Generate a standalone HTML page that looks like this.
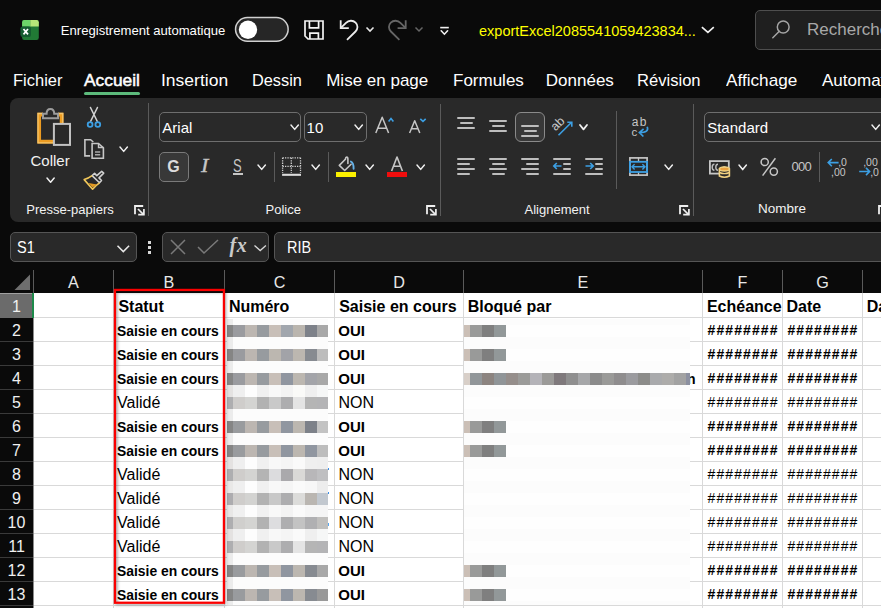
<!DOCTYPE html>
<html><head><meta charset="utf-8"><style>
html,body{margin:0;padding:0;}
body{width:881px;height:608px;overflow:hidden;position:relative;background:#0a0a0a;font-family:"Liberation Sans", sans-serif;}
.t{position:absolute;white-space:nowrap;}
.r{position:absolute;box-sizing:content-box;}
svg.r{overflow:visible;}
</style></head><body>
<svg class="r" style="left:10px;top:12px;" width="35" height="35" viewBox="0 0 35 35">
<rect x="12.1" y="8.1" width="16.7" height="19.8" rx="2.2" fill="#217a35"/>
<path d="M12.1 14.4 V10.3 Q12.1 8.1 14.3 8.1 H20.3 V14.4 Z" fill="#6dd469"/>
<path d="M20.3 8.1 H26.6 Q28.8 8.1 28.8 10.3 V14.4 H20.3 Z" fill="#b6e878"/>
<rect x="10.4" y="14.4" width="10.6" height="10.6" rx="2.2" fill="#155c30"/>
<path d="M13.5 17 L18 22.4 M18 17 L13.5 22.4" stroke="#fff" stroke-width="1.7"/>
</svg>
<div class="t" style="left:60.8px;top:23.81px;font-size:13.1px;line-height:13.1px;color:#fff;font-weight:400;">Enregistrement automatique</div>
<svg class="r" style="left:234px;top:16px;" width="56" height="27" viewBox="0 0 56 27"><rect x="1.55" y="1.55" width="52.6" height="23.6" rx="11.8" fill="#262626" stroke="#d0d0d0" stroke-width="1.5"/><circle cx="14" cy="13.7" r="9.2" fill="#fff"/></svg>
<svg class="r" style="left:303px;top:19px;" width="22" height="22" viewBox="0 0 22 22">
<path d="M2 2 H20 V20 H5 L2 17 Z" fill="none" stroke="#f4f4f4" stroke-width="1.7"/>
<path d="M6.4 2 V8.9 H15.6 V2" fill="none" stroke="#f4f4f4" stroke-width="1.7"/>
<path d="M6.9 20 V14.1 H15.4 V20" fill="none" stroke="#f4f4f4" stroke-width="1.7"/>
</svg>
<svg class="r" style="left:335px;top:15px;" width="30" height="30" viewBox="0 0 30 30">
<path d="M5.7 5.2 V13.1 H13.8" fill="none" stroke="#ececec" stroke-width="1.8"/>
<path d="M5.9 12.9 L11 7.8 C13.6 5.2 18 5.0 20.6 7.6 C23.2 10.2 23 14 20.5 16.5 L12 24.8" fill="none" stroke="#ececec" stroke-width="1.8"/>
</svg>
<svg class="r" style="left:365px;top:26px;" width="10" height="7" viewBox="0 0 10 7"><path d="M1.5 1.5 L5 5 L8.5 1.5" fill="none" stroke="#e8e8e8" stroke-width="1.6"/></svg>
<svg class="r" style="left:383px;top:15px;" width="30" height="30" viewBox="0 0 30 30"><g transform="translate(28.4,0) scale(-1,1)">
<path d="M5.7 5.2 V13.1 H13.8" fill="none" stroke="#666" stroke-width="1.8"/>
<path d="M5.9 12.9 L11 7.8 C13.6 5.2 18 5.0 20.6 7.6 C23.2 10.2 23 14 20.5 16.5 L12 24.8" fill="none" stroke="#666" stroke-width="1.8"/></g>
</svg>
<svg class="r" style="left:413.5px;top:26px;" width="10" height="7" viewBox="0 0 10 7"><path d="M1.5 1.5 L5 5 L8.5 1.5" fill="none" stroke="#666" stroke-width="1.5"/></svg>
<svg class="r" style="left:430px;top:15px;" width="30" height="30" viewBox="0 0 30 30"><path d="M10.2 12.6 H18.8" stroke="#f0f0f0" stroke-width="1.6"/><path d="M11.2 15.8 L14.4 19.2 L17.6 15.8" fill="none" stroke="#f0f0f0" stroke-width="1.6" stroke-linecap="round"/></svg>
<div class="t" style="left:479.0px;top:23.63px;font-size:14.5px;line-height:14.5px;color:#ffff00;font-weight:400;">exportExcel2085541059423834...</div>
<svg class="r" style="left:695px;top:15px;" width="30" height="30" viewBox="0 0 30 30"><path d="M6.9 12.2 L12.9 17.4 L18.8 12.2" fill="none" stroke="#f0f0f0" stroke-width="1.7"/></svg>
<div class="r" style="left:755px;top:10px;width:140px;height:38px;border:1px solid #4e4e4e;border-radius:5px;background:#1f1f1f"></div>
<svg class="r" style="left:760px;top:12px;" width="40" height="40" viewBox="0 0 40 40"><circle cx="23.2" cy="15" r="5.9" fill="none" stroke="#a4a4a4" stroke-width="1.5"/><path d="M19.3 19.3 L12.8 25.8" stroke="#a4a4a4" stroke-width="1.5" stroke-linecap="round"/></svg>
<div class="t" style="left:807.0px;top:20.71px;font-size:17px;line-height:17px;color:#a8a8a8;font-weight:400;">Recherche</div>
<div class="t" style="left:13.0px;top:71.61px;font-size:17px;line-height:17px;color:#ffffff;font-weight:400;transform:scaleX(0.97);transform-origin:0 0;">Fichier</div>
<div class="t" style="left:84.0px;top:71.61px;font-size:17px;line-height:17px;color:#ffffff;font-weight:400;transform:scaleX(1.02);transform-origin:0 0;-webkit-text-stroke:0.5px #fff;">Accueil</div>
<div class="t" style="left:161.2px;top:71.61px;font-size:17px;line-height:17px;color:#ffffff;font-weight:400;transform:scaleX(1.03);transform-origin:0 0;">Insertion</div>
<div class="t" style="left:252.0px;top:71.61px;font-size:17px;line-height:17px;color:#ffffff;font-weight:400;transform:scaleX(0.96);transform-origin:0 0;">Dessin</div>
<div class="t" style="left:326.2px;top:71.61px;font-size:17px;line-height:17px;color:#ffffff;font-weight:400;">Mise en page</div>
<div class="t" style="left:453.0px;top:71.61px;font-size:17px;line-height:17px;color:#ffffff;font-weight:400;">Formules</div>
<div class="t" style="left:545.8px;top:71.61px;font-size:17px;line-height:17px;color:#ffffff;font-weight:400;">Données</div>
<div class="t" style="left:636.6px;top:71.61px;font-size:17px;line-height:17px;color:#ffffff;font-weight:400;transform:scaleX(0.975);transform-origin:0 0;">Révision</div>
<div class="t" style="left:726.0px;top:71.61px;font-size:17px;line-height:17px;color:#ffffff;font-weight:400;transform:scaleX(1.01);transform-origin:0 0;">Affichage</div>
<div class="t" style="left:822.0px;top:71.61px;font-size:17px;line-height:17px;color:#ffffff;font-weight:400;">Automatisation</div>
<div class="r" style="left:84px;top:92px;width:56px;height:3px;border-radius:2px;background:#5cba7b"></div>
<div class="r" style="left:10px;top:98px;width:900px;height:124px;border-radius:8px;background:#292929"></div>
<svg class="r" style="left:34px;top:104px;" width="44" height="44" viewBox="0 0 44 44">
<path d="M9 10.7 H5.2 V37.7 H19.5 M24 10.7 H27.6 V19" fill="none" stroke="#ec9c22" stroke-width="3.7"/>
<path d="M9 9.5 H4 V38.9 H19.5 M24 9.5 H28.8 V19" fill="none" stroke="#f5c56c" stroke-width="1.3"/>
<path d="M9 14.2 V9.8 H12.6 Q12.6 5 16.4 5 Q20.2 5 20.2 9.8 H24 V14.2 Z" fill="#292929" stroke="#9c9c9c" stroke-width="2"/>
<rect x="19.9" y="19.9" width="16.1" height="21" fill="#292929" stroke="#c2c2c2" stroke-width="2"/>
</svg>
<div class="t" style="left:30.5px;top:153.30px;font-size:15px;line-height:15px;color:#f2f2f2;font-weight:400;">Coller</div>
<svg class="r" style="left:46px;top:176.5px;" width="9.2" height="6.2" viewBox="0 0 9.2 6.2"><path d="M1 1 L4.6 5.2 L8.2 1" fill="none" stroke="#f0f0f0" stroke-width="1.5" stroke-linecap="round" stroke-linejoin="round"/></svg>
<svg class="r" style="left:80px;top:103px;" width="30" height="30" viewBox="0 0 30 30">
<path d="M10.4 4.4 L17.3 18.4 M17.5 4.4 L10.6 18.4" stroke="#d4d4d4" stroke-width="1.4" fill="none" stroke-linecap="round"/>
<circle cx="10.1" cy="21.5" r="2.4" fill="none" stroke="#3c9fe3" stroke-width="1.8"/>
<circle cx="17.8" cy="21.5" r="2.4" fill="none" stroke="#3c9fe3" stroke-width="1.8"/>
</svg>
<svg class="r" style="left:80px;top:133px;" width="30" height="30" viewBox="0 0 30 30">
<path d="M10.1 22.9 H4.9 V6.7 H10.6 L13.3 9" fill="none" stroke="#c6c6c6" stroke-width="1.6"/>
<path d="M12.1 10.5 H18.5 L23.4 14.8 V25.2 H12.1 Z" fill="none" stroke="#c6c6c6" stroke-width="1.6"/>
<path d="M18.5 10.5 V14.5 H23.4" fill="none" stroke="#c6c6c6" stroke-width="1.4"/>
<path d="M15 19 H20.2 M15 21.7 H20.2" stroke="#a8a8a8" stroke-width="1.4"/>
</svg>
<svg class="r" style="left:118.6px;top:146.3px;" width="9.4" height="6.4" viewBox="0 0 9.4 6.4"><path d="M1 1 L4.7 5.4 L8.4 1" fill="none" stroke="#f0f0f0" stroke-width="1.5" stroke-linecap="round" stroke-linejoin="round"/></svg>
<svg class="r" style="left:80px;top:165px;" width="30" height="30" viewBox="0 0 30 30">
<path d="M12.1 10.6 L14.6 8.4 L16.8 10.6 L21.7 6.4 L23.7 8.1 L19 12.9 L21.5 15.5 L19.5 17.8 Z" fill="none" stroke="#d0d0d0" stroke-width="1.6" stroke-linejoin="round"/>
<path d="M12.1 10.6 Q8 13.5 4.2 14.6 L12.6 24.2 Q15.5 20.5 19.5 17.8" fill="none" stroke="#f2c85a" stroke-width="1.6" stroke-linejoin="round"/>
<path d="M8.6 18 L17 19.5 L12.4 22.6 Z" fill="#e39a22"/>
</svg>
<div class="t" style="left:26.3px;top:202.60px;font-size:13px;line-height:13px;color:#f2f2f2;font-weight:400;">Presse-papiers</div>
<svg class="r" style="left:133.5px;top:204.5px;" width="12" height="11" viewBox="0 0 12 11"><path d="M1 9.2 V1 H9.2" fill="none" stroke="#efefef" stroke-width="1.8"/><path d="M4 4 L9.6 9.6" stroke="#efefef" stroke-width="1.7"/><path d="M4.2 9.6 H9.9 V3.9" fill="none" stroke="#efefef" stroke-width="1.7"/></svg>
<div class="r" style="left:148px;top:103px;width:1px;height:113px;background:#5a5a5a;"></div>
<div class="r" style="left:159px;top:112px;width:140px;height:28px;border:1px solid #6e6e6e;border-radius:5px;"></div>
<div class="t" style="left:162.3px;top:120.00px;font-size:15px;line-height:15px;color:#ffffff;font-weight:400;">Arial</div>
<svg class="r" style="left:289.8px;top:124px;" width="9.4" height="6.4" viewBox="0 0 9.4 6.4"><path d="M1 1 L4.7 5.4 L8.4 1" fill="none" stroke="#f0f0f0" stroke-width="1.5" stroke-linecap="round" stroke-linejoin="round"/></svg>
<div class="r" style="left:304px;top:112px;width:61px;height:28px;border:1px solid #6e6e6e;border-radius:5px;"></div>
<div class="t" style="left:306.6px;top:120.00px;font-size:15px;line-height:15px;color:#ffffff;font-weight:400;">10</div>
<svg class="r" style="left:354.4px;top:124px;" width="9.4" height="6.4" viewBox="0 0 9.4 6.4"><path d="M1 1 L4.7 5.4 L8.4 1" fill="none" stroke="#f0f0f0" stroke-width="1.5" stroke-linecap="round" stroke-linejoin="round"/></svg>
<svg class="r" style="left:370px;top:112px;" width="30" height="25" viewBox="0 0 30 25">
<path d="M5.8 21 L12.2 5.2 L18.6 21 M8.1 16.2 H16.4" fill="none" stroke="#c6c6c6" stroke-width="1.5" stroke-linejoin="round"/>
<path d="M18.6 9.4 L21 6.6 L23.4 9.4" fill="none" stroke="#3c9fe3" stroke-width="1.6"/>
</svg>
<svg class="r" style="left:405px;top:112px;" width="25" height="25" viewBox="0 0 25 25">
<path d="M4.6 21 L9.7 8.8 L14.8 21 M6.5 16.8 H13" fill="none" stroke="#c6c6c6" stroke-width="1.5" stroke-linejoin="round"/>
<path d="M15.3 6.8 L18 9.4 L20.7 6.8" fill="none" stroke="#3c9fe3" stroke-width="1.6"/>
</svg>
<div class="r" style="left:159px;top:152px;width:28px;height:28px;border:1px solid #7a7a7a;border-radius:5px;background:#383838"></div>
<div class="t" style="left:167.3px;top:158.66px;font-size:16px;line-height:16px;color:#dcdcdc;font-weight:700;">G</div>
<div class="t" style="left:201.2px;top:156.54px;font-size:18.5px;line-height:18.5px;color:#c6c6c6;font-weight:400;font-family:'Liberation Serif',serif;font-style:italic;transform:scaleX(1.2);transform-origin:0 0;-webkit-text-stroke:0.3px #c6c6c6;">I</div>
<div class="t" style="left:232.7px;top:156.96px;font-size:18px;line-height:18px;color:#c6c6c6;font-weight:400;transform:scaleX(0.72);transform-origin:0 0;">S</div>
<div class="r" style="left:233px;top:173px;width:10px;height:2px;background:#c6c6c6;"></div>
<svg class="r" style="left:257px;top:164.2px;" width="9.4" height="6.4" viewBox="0 0 9.4 6.4"><path d="M1 1 L4.7 5.4 L8.4 1" fill="none" stroke="#f0f0f0" stroke-width="1.5" stroke-linecap="round" stroke-linejoin="round"/></svg>
<div class="r" style="left:274px;top:152px;width:1px;height:30px;background:#5a5a5a;"></div>
<svg class="r" style="left:278px;top:150px;" width="30" height="30" viewBox="0 0 30 30">
<path d="M4.6 7.8 H22.5 M4.6 16.3 H22.5 M4.6 7.8 V23 M13.3 7.8 V23 M22.5 7.8 V23" fill="none" stroke="#d0d0d0" stroke-width="1.3" stroke-dasharray="1.3 1.1"/>
<path d="M4.1 24.8 H23" stroke="#dcdcdc" stroke-width="2.1"/>
</svg>
<svg class="r" style="left:310.7px;top:164.2px;" width="9.4" height="6.4" viewBox="0 0 9.4 6.4"><path d="M1 1 L4.7 5.4 L8.4 1" fill="none" stroke="#f0f0f0" stroke-width="1.5" stroke-linecap="round" stroke-linejoin="round"/></svg>
<div class="r" style="left:328px;top:152px;width:1px;height:30px;background:#5a5a5a;"></div>
<svg class="r" style="left:330px;top:150px;" width="30" height="25" viewBox="0 0 30 25">
<path d="M15.4 9.3 L9.3 15.4 L14.7 20.5 L21.1 14.2" fill="none" stroke="#c6c6c6" stroke-width="1.6" stroke-linejoin="round" stroke-linecap="round"/>
<path d="M15.4 9.3 Q15.6 7.1 16.7 7.1 Q17.9 7.1 17.9 9.2 V13.4" fill="none" stroke="#c6c6c6" stroke-width="1.6" stroke-linecap="round"/>
<path d="M20.9 11.6 Q23.7 12.6 23.6 18.8" fill="none" stroke="#66b2e8" stroke-width="1.9" stroke-linecap="round"/>
</svg>
<div class="r" style="left:336px;top:172px;width:20px;height:5px;background:#fbf000;"></div>
<svg class="r" style="left:364.6px;top:164.2px;" width="9.4" height="6.4" viewBox="0 0 9.4 6.4"><path d="M1 1 L4.7 5.4 L8.4 1" fill="none" stroke="#f0f0f0" stroke-width="1.5" stroke-linecap="round" stroke-linejoin="round"/></svg>
<svg class="r" style="left:386px;top:154px;" width="22" height="19" viewBox="0 0 22 19"><path d="M5.6 17 L11 3 L16.4 17 M7.5 12.3 H14.5" fill="none" stroke="#c6c6c6" stroke-width="1.6" stroke-linejoin="round"/></svg>
<div class="r" style="left:387px;top:172px;width:20px;height:5px;background:#f00d0d;"></div>
<svg class="r" style="left:415.6px;top:164.2px;" width="9.4" height="6.4" viewBox="0 0 9.4 6.4"><path d="M1 1 L4.7 5.4 L8.4 1" fill="none" stroke="#f0f0f0" stroke-width="1.5" stroke-linecap="round" stroke-linejoin="round"/></svg>
<div class="t" style="left:265.5px;top:203.00px;font-size:13px;line-height:13px;color:#f2f2f2;font-weight:400;">Police</div>
<svg class="r" style="left:425.5px;top:204.5px;" width="12" height="11" viewBox="0 0 12 11"><path d="M1 9.2 V1 H9.2" fill="none" stroke="#efefef" stroke-width="1.8"/><path d="M4 4 L9.6 9.6" stroke="#efefef" stroke-width="1.7"/><path d="M4.2 9.6 H9.9 V3.9" fill="none" stroke="#efefef" stroke-width="1.7"/></svg>
<div class="r" style="left:440px;top:104px;width:1px;height:112px;background:#5a5a5a;"></div>
<div class="r" style="left:457px;top:117px;width:18px;height:2px;border-radius:1px;background:#bdbdbd"></div>
<div class="r" style="left:460px;top:122px;width:13px;height:2px;border-radius:1px;background:#bdbdbd"></div>
<div class="r" style="left:457px;top:127px;width:18px;height:2px;border-radius:1px;background:#bdbdbd"></div>
<div class="r" style="left:489px;top:120px;width:18px;height:2px;border-radius:1px;background:#bdbdbd"></div>
<div class="r" style="left:491.5px;top:125px;width:13.0px;height:2px;border-radius:1px;background:#bdbdbd"></div>
<div class="r" style="left:489px;top:130px;width:18px;height:2px;border-radius:1px;background:#bdbdbd"></div>
<div class="r" style="left:515px;top:112px;width:28px;height:28px;border:1px solid #8a8a8a;border-radius:6px;background:#383838"></div>
<div class="r" style="left:521px;top:125px;width:18px;height:2px;border-radius:1px;background:#bdbdbd"></div>
<div class="r" style="left:523.5px;top:130px;width:13.0px;height:2px;border-radius:1px;background:#bdbdbd"></div>
<div class="r" style="left:521px;top:135px;width:18px;height:2px;border-radius:1px;background:#bdbdbd"></div>
<div class="r" style="left:457px;top:158px;width:18px;height:2px;border-radius:1px;background:#bdbdbd"></div>
<div class="r" style="left:457px;top:163px;width:13px;height:2px;border-radius:1px;background:#bdbdbd"></div>
<div class="r" style="left:457px;top:168px;width:18px;height:2px;border-radius:1px;background:#bdbdbd"></div>
<div class="r" style="left:457px;top:173px;width:13px;height:2px;border-radius:1px;background:#bdbdbd"></div>
<div class="r" style="left:489px;top:158px;width:18px;height:2px;border-radius:1px;background:#bdbdbd"></div>
<div class="r" style="left:491.5px;top:163px;width:13.0px;height:2px;border-radius:1px;background:#bdbdbd"></div>
<div class="r" style="left:489px;top:168px;width:18px;height:2px;border-radius:1px;background:#bdbdbd"></div>
<div class="r" style="left:491.5px;top:173px;width:13.0px;height:2px;border-radius:1px;background:#bdbdbd"></div>
<div class="r" style="left:521px;top:158px;width:18px;height:2px;border-radius:1px;background:#bdbdbd"></div>
<div class="r" style="left:526px;top:163px;width:13px;height:2px;border-radius:1px;background:#bdbdbd"></div>
<div class="r" style="left:521px;top:168px;width:18px;height:2px;border-radius:1px;background:#bdbdbd"></div>
<div class="r" style="left:526px;top:173px;width:13px;height:2px;border-radius:1px;background:#bdbdbd"></div>
<div class="r" style="left:553px;top:158px;width:18px;height:2px;border-radius:1px;background:#bdbdbd"></div>
<div class="r" style="left:563px;top:163px;width:8px;height:2px;border-radius:1px;background:#bdbdbd"></div>
<div class="r" style="left:563px;top:168px;width:8px;height:2px;border-radius:1px;background:#bdbdbd"></div>
<div class="r" style="left:553px;top:173px;width:18px;height:2px;border-radius:1px;background:#bdbdbd"></div>
<div class="r" style="left:585px;top:158px;width:18px;height:2px;border-radius:1px;background:#bdbdbd"></div>
<div class="r" style="left:595px;top:163px;width:8px;height:2px;border-radius:1px;background:#bdbdbd"></div>
<div class="r" style="left:595px;top:168px;width:8px;height:2px;border-radius:1px;background:#bdbdbd"></div>
<div class="r" style="left:585px;top:173px;width:18px;height:2px;border-radius:1px;background:#bdbdbd"></div>
<svg class="r" style="left:552px;top:161px;" width="11" height="10" viewBox="0 0 11 10"><path d="M9.5 5 H1.8 M4.8 2 L1.8 5 L4.8 8" fill="none" stroke="#3c9fe3" stroke-width="1.7"/></svg>
<svg class="r" style="left:584px;top:161px;" width="11" height="10" viewBox="0 0 11 10"><path d="M1.5 5 H9.2 M6.2 2 L9.2 5 L6.2 8" fill="none" stroke="#3c9fe3" stroke-width="1.7"/></svg>
<svg class="r" style="left:545px;top:108px;" width="30" height="30" viewBox="0 0 30 30">
<text x="0" y="0" transform="translate(10.6,23.6) rotate(-45)" font-family="Liberation Sans" font-size="12.5" fill="#c6c6c6">ab</text>
<path d="M13.5 27.2 L26.6 14.3 M22.3 14.3 H26.8 V18.8" fill="none" stroke="#3c9fe3" stroke-width="1.6"/>
</svg>
<svg class="r" style="left:578.9px;top:124.3px;" width="9" height="6.4" viewBox="0 0 9 6.4"><path d="M1 1 L4.5 5.4 L8 1" fill="none" stroke="#f0f0f0" stroke-width="1.8" stroke-linecap="round" stroke-linejoin="round"/></svg>
<div class="r" style="left:616px;top:111px;width:1px;height:78px;background:#5a5a5a;"></div>
<svg class="r" style="left:622px;top:112px;" width="30" height="30" viewBox="0 0 30 30">
<text x="9.8" y="14.2" font-family="Liberation Sans" font-size="12" fill="#c6c6c6" letter-spacing="1.3">ab</text>
<text x="9.4" y="23.7" font-family="Liberation Sans" font-size="11.5" fill="#c6c6c6">c</text>
<path d="M25.2 14.8 Q27.5 20.5 17.5 20.6 M21.6 16.8 L17.4 20.6 L21.4 24.5" fill="none" stroke="#3c9fe3" stroke-width="1.7"/>
</svg>
<svg class="r" style="left:622px;top:112px;overflow:visible" width="30" height="30" viewBox="0 0 30 30">
<rect x="7.9" y="45.9" width="17.2" height="17.2" fill="none" stroke="#c6c6c6" stroke-width="1.7"/>
<path d="M16.5 45.5 V49 M16.5 60 V63.5" stroke="#c6c6c6" stroke-width="1.3"/>
<rect x="7.9" y="49.8" width="17.2" height="10.2" fill="none" stroke="#3c9fe3" stroke-width="1.8"/>
<path d="M10 54.8 H23 M12.6 52.2 L10 54.8 L12.6 57.4 M20.4 52.2 L23 54.8 L20.4 57.4" fill="none" stroke="#3c9fe3" stroke-width="1.4"/>
</svg>
<svg class="r" style="left:663.7px;top:164.3px;" width="9.4" height="6.4" viewBox="0 0 9.4 6.4"><path d="M1 1 L4.7 5.4 L8.4 1" fill="none" stroke="#f0f0f0" stroke-width="1.5" stroke-linecap="round" stroke-linejoin="round"/></svg>
<div class="t" style="left:524.5px;top:203.10px;font-size:13px;line-height:13px;color:#f2f2f2;font-weight:400;">Alignement</div>
<svg class="r" style="left:678.8px;top:204.5px;" width="12" height="11" viewBox="0 0 12 11"><path d="M1 9.2 V1 H9.2" fill="none" stroke="#efefef" stroke-width="1.8"/><path d="M4 4 L9.6 9.6" stroke="#efefef" stroke-width="1.7"/><path d="M4.2 9.6 H9.9 V3.9" fill="none" stroke="#efefef" stroke-width="1.7"/></svg>
<div class="r" style="left:693px;top:104px;width:1px;height:112px;background:#5a5a5a;"></div>
<div class="r" style="left:704px;top:112px;width:300px;height:28px;border:1px solid #6e6e6e;border-radius:5px;"></div>
<div class="t" style="left:707.2px;top:120.20px;font-size:15px;line-height:15px;color:#ffffff;font-weight:400;">Standard</div>
<svg class="r" style="left:871.4px;top:124px;" width="9.4" height="6.4" viewBox="0 0 9.4 6.4"><path d="M1 1 L4.7 5.4 L8.4 1" fill="none" stroke="#f0f0f0" stroke-width="1.5" stroke-linecap="round" stroke-linejoin="round"/></svg>
<svg class="r" style="left:703px;top:152px;" width="30" height="28" viewBox="0 0 30 28">
<rect x="6.9" y="9.1" width="18.9" height="12.5" fill="none" stroke="#c6c6c6" stroke-width="1.8"/>
<path d="M11.4 12.3 Q9.2 12.3 9.2 15.3 Q9.2 18.3 11.4 18.3 M15 12.3 Q12.8 12.3 12.8 15.3 Q12.8 18.3 15 18.3" fill="none" stroke="#bdbdbd" stroke-width="1.4"/>
<ellipse cx="21.2" cy="15.6" rx="2" ry="1.6" fill="#a0a0a0"/>
<path d="M16.4 17 V24.1 Q21.4 26.4 26.4 24.1 V17 Z" fill="#292929" stroke="#f0d080" stroke-width="1.6"/>
<ellipse cx="21.4" cy="17" rx="5" ry="2" fill="#e8a040" stroke="#f0d080" stroke-width="1.3"/>
<path d="M16.4 20.5 Q21.4 22.8 26.4 20.5" fill="none" stroke="#f0d080" stroke-width="1.4"/>
</svg>
<svg class="r" style="left:737.6px;top:164px;" width="9.4" height="6.6" viewBox="0 0 9.4 6.6"><path d="M1 1 L4.7 5.6 L8.4 1" fill="none" stroke="#f0f0f0" stroke-width="1.5" stroke-linecap="round" stroke-linejoin="round"/></svg>
<svg class="r" style="left:758px;top:156px;" width="24" height="22" viewBox="0 0 24 22">
<circle cx="6.7" cy="6" r="3.6" fill="none" stroke="#c6c6c6" stroke-width="1.5"/>
<circle cx="15.8" cy="15.6" r="3.6" fill="none" stroke="#c6c6c6" stroke-width="1.5"/>
<path d="M17.4 2.2 L4.6 19.6" stroke="#c6c6c6" stroke-width="1.5"/>
</svg>
<div class="t" style="left:791.5px;top:160.40px;font-size:13px;line-height:13px;color:#c6c6c6;font-weight:400;letter-spacing:-0.75px;">000</div>
<div class="r" style="left:819px;top:152px;width:1px;height:30px;background:#5a5a5a;"></div>
<svg class="r" style="left:826px;top:156px;" width="22" height="21" viewBox="0 0 22 21">
<path d="M12.6 6.6 H2.2 M5.8 3 L2.2 6.6 L5.8 10.2" fill="none" stroke="#3c9fe3" stroke-width="1.6"/>
<text x="12.2" y="9.7" font-family="Liberation Sans" font-size="10.5" fill="#c6c6c6">,0</text>
<text x="5" y="19.8" font-family="Liberation Sans" font-size="10.5" fill="#c6c6c6">,00</text>
</svg>
<svg class="r" style="left:857px;top:156px;" width="24" height="21" viewBox="0 0 24 21">
<text x="6.2" y="9.7" font-family="Liberation Sans" font-size="10.5" fill="#c6c6c6">,00</text>
<path d="M2.2 15.5 H12.6 M9 11.9 L12.6 15.5 L9 19.1" fill="none" stroke="#3c9fe3" stroke-width="1.6"/>
<text x="13.2" y="19.8" font-family="Liberation Sans" font-size="10.5" fill="#c6c6c6">,0</text>
</svg>
<div class="t" style="left:757.9px;top:202.17px;font-size:13.5px;line-height:13.5px;color:#f2f2f2;font-weight:400;">Nombre</div>
<svg class="r" style="left:878px;top:204.5px;" width="12" height="11" viewBox="0 0 12 11"><path d="M1 9.2 V1 H9.2" fill="none" stroke="#efefef" stroke-width="1.8"/><path d="M4 4 L9.6 9.6" stroke="#efefef" stroke-width="1.7"/><path d="M4.2 9.6 H9.9 V3.9" fill="none" stroke="#efefef" stroke-width="1.7"/></svg>
<div class="r" style="left:10px;top:232px;width:125px;height:28px;border:1px solid #555;border-radius:5px;background:#292929"></div>
<div class="t" style="left:16.6px;top:239.13px;font-size:16.5px;line-height:16.5px;color:#ffffff;font-weight:400;transform:scaleX(0.88);transform-origin:0 0;">S1</div>
<svg class="r" style="left:116px;top:244px;" width="15" height="10" viewBox="0 0 15 10"><path d="M1.5 1.8 L7.3 7.6 L13.1 1.8" fill="none" stroke="#e8e8e8" stroke-width="1.5"/></svg>
<div class="r" style="left:148px;top:241px;width:3px;height:3px;background:#d8d8d8;"></div>
<div class="r" style="left:148px;top:246px;width:3px;height:3px;background:#d8d8d8;"></div>
<div class="r" style="left:148px;top:251px;width:3px;height:3px;background:#d8d8d8;"></div>
<div class="r" style="left:162px;top:232px;width:105px;height:28px;border:1px solid #555;border-radius:5px;background:#292929"></div>
<svg class="r" style="left:170px;top:239px;" width="16" height="16" viewBox="0 0 16 16"><path d="M1 1 L15 15 M15 1 L1 15" stroke="#7a7a7a" stroke-width="1.5"/></svg>
<svg class="r" style="left:197px;top:239px;" width="22" height="16" viewBox="0 0 22 16"><path d="M1 8 L7 14 L21 1" fill="none" stroke="#7a7a7a" stroke-width="1.5"/></svg>
<div class="t" style="left:229.5px;top:234.57px;font-size:20px;line-height:20px;color:#cacaca;font-weight:700;font-family:'Liberation Serif',serif;font-style:italic;letter-spacing:0.6px;">fx</div>
<svg class="r" style="left:252.5px;top:244px;" width="14" height="8" viewBox="0 0 14 8"><path d="M1.5 1.5 L7.2 6.6 L12.9 1.5" fill="none" stroke="#d8d8d8" stroke-width="1.3"/></svg>
<div class="r" style="left:274px;top:232px;width:700px;height:28px;border:1px solid #555;border-radius:5px;background:#292929"></div>
<div class="t" style="left:287.0px;top:239.66px;font-size:16px;line-height:16px;color:#ffffff;font-weight:400;transform:scaleX(0.9);transform-origin:0 0;">RIB</div>
<div class="r" style="left:33px;top:270px;width:1px;height:23px;background:#5a5a5a;"></div>
<div class="r" style="left:113px;top:270px;width:1px;height:23px;background:#5a5a5a;"></div>
<div class="r" style="left:224px;top:270px;width:1px;height:23px;background:#5a5a5a;"></div>
<div class="r" style="left:334px;top:270px;width:1px;height:23px;background:#5a5a5a;"></div>
<div class="r" style="left:463px;top:270px;width:1px;height:23px;background:#5a5a5a;"></div>
<div class="r" style="left:702px;top:270px;width:1px;height:23px;background:#5a5a5a;"></div>
<div class="r" style="left:782px;top:270px;width:1px;height:23px;background:#5a5a5a;"></div>
<div class="r" style="left:862px;top:270px;width:1px;height:23px;background:#5a5a5a;"></div>
<div class="t" style="left:34px;width:79px;text-align:center;top:274.49px;font-size:16.2px;line-height:16.2px;color:#e8e8e8">A</div>
<div class="t" style="left:114px;width:110px;text-align:center;top:274.49px;font-size:16.2px;line-height:16.2px;color:#e8e8e8">B</div>
<div class="t" style="left:225px;width:109px;text-align:center;top:274.49px;font-size:16.2px;line-height:16.2px;color:#e8e8e8">C</div>
<div class="t" style="left:335px;width:128px;text-align:center;top:274.49px;font-size:16.2px;line-height:16.2px;color:#e8e8e8">D</div>
<div class="t" style="left:464px;width:238px;text-align:center;top:274.49px;font-size:16.2px;line-height:16.2px;color:#e8e8e8">E</div>
<div class="t" style="left:703px;width:79px;text-align:center;top:274.49px;font-size:16.2px;line-height:16.2px;color:#e8e8e8">F</div>
<div class="t" style="left:783px;width:79px;text-align:center;top:274.49px;font-size:16.2px;line-height:16.2px;color:#e8e8e8">G</div>
<div class="t" style="left:863px;width:79px;text-align:center;top:274.49px;font-size:16.2px;line-height:16.2px;color:#e8e8e8">H</div>
<svg class="r" style="left:14px;top:274px;" width="17" height="17" viewBox="0 0 17 17"><path d="M16 0.5 V16 H0.5 Z" fill="#6e6e6e"/></svg>
<div class="r" style="left:34px;top:293px;width:847px;height:315px;background:#ffffff;"></div>
<div class="r" style="left:113px;top:293px;width:1px;height:315px;background:#d9d9d9;"></div>
<div class="r" style="left:224px;top:293px;width:1px;height:315px;background:#d9d9d9;"></div>
<div class="r" style="left:334px;top:293px;width:1px;height:315px;background:#d9d9d9;"></div>
<div class="r" style="left:463px;top:293px;width:1px;height:315px;background:#d9d9d9;"></div>
<div class="r" style="left:702px;top:293px;width:1px;height:315px;background:#d9d9d9;"></div>
<div class="r" style="left:782px;top:293px;width:1px;height:315px;background:#d9d9d9;"></div>
<div class="r" style="left:862px;top:293px;width:1px;height:315px;background:#d9d9d9;"></div>
<div class="r" style="left:34px;top:317px;width:847px;height:1px;background:#d9d9d9;"></div>
<div class="r" style="left:34px;top:341px;width:847px;height:1px;background:#d9d9d9;"></div>
<div class="r" style="left:34px;top:365px;width:847px;height:1px;background:#d9d9d9;"></div>
<div class="r" style="left:34px;top:389px;width:847px;height:1px;background:#d9d9d9;"></div>
<div class="r" style="left:34px;top:413px;width:847px;height:1px;background:#d9d9d9;"></div>
<div class="r" style="left:34px;top:437px;width:847px;height:1px;background:#d9d9d9;"></div>
<div class="r" style="left:34px;top:461px;width:847px;height:1px;background:#d9d9d9;"></div>
<div class="r" style="left:34px;top:485px;width:847px;height:1px;background:#d9d9d9;"></div>
<div class="r" style="left:34px;top:509px;width:847px;height:1px;background:#d9d9d9;"></div>
<div class="r" style="left:34px;top:533px;width:847px;height:1px;background:#d9d9d9;"></div>
<div class="r" style="left:34px;top:557px;width:847px;height:1px;background:#d9d9d9;"></div>
<div class="r" style="left:34px;top:581px;width:847px;height:1px;background:#d9d9d9;"></div>
<div class="r" style="left:34px;top:605px;width:847px;height:1px;background:#d9d9d9;"></div>
<div class="r" style="left:0px;top:293px;width:33px;height:25px;background:#6b6b6b;"></div>
<div class="r" style="left:0px;top:293px;width:33px;height:1px;background:#a0a0a0;"></div>
<div class="r" style="left:33px;top:318px;width:1px;height:290px;background:#8c8c8c;"></div>
<div class="r" style="left:32px;top:293px;width:2px;height:25px;background:#1d8a4a;"></div>
<div class="r" style="left:0px;top:341px;width:33px;height:1px;background:#3a3a3a;"></div>
<div class="r" style="left:0px;top:365px;width:33px;height:1px;background:#3a3a3a;"></div>
<div class="r" style="left:0px;top:389px;width:33px;height:1px;background:#3a3a3a;"></div>
<div class="r" style="left:0px;top:413px;width:33px;height:1px;background:#3a3a3a;"></div>
<div class="r" style="left:0px;top:437px;width:33px;height:1px;background:#3a3a3a;"></div>
<div class="r" style="left:0px;top:461px;width:33px;height:1px;background:#3a3a3a;"></div>
<div class="r" style="left:0px;top:485px;width:33px;height:1px;background:#3a3a3a;"></div>
<div class="r" style="left:0px;top:509px;width:33px;height:1px;background:#3a3a3a;"></div>
<div class="r" style="left:0px;top:533px;width:33px;height:1px;background:#3a3a3a;"></div>
<div class="r" style="left:0px;top:557px;width:33px;height:1px;background:#3a3a3a;"></div>
<div class="r" style="left:0px;top:581px;width:33px;height:1px;background:#3a3a3a;"></div>
<div class="r" style="left:0px;top:605px;width:33px;height:1px;background:#3a3a3a;"></div>
<div class="t" style="left:0px;width:33px;text-align:center;top:298.96px;font-size:16px;line-height:16px;color:#f0f0f0">1</div>
<div class="t" style="left:0px;width:33px;text-align:center;top:322.96px;font-size:16px;line-height:16px;color:#f0f0f0">2</div>
<div class="t" style="left:0px;width:33px;text-align:center;top:346.96px;font-size:16px;line-height:16px;color:#f0f0f0">3</div>
<div class="t" style="left:0px;width:33px;text-align:center;top:370.96px;font-size:16px;line-height:16px;color:#f0f0f0">4</div>
<div class="t" style="left:0px;width:33px;text-align:center;top:394.96px;font-size:16px;line-height:16px;color:#f0f0f0">5</div>
<div class="t" style="left:0px;width:33px;text-align:center;top:418.96px;font-size:16px;line-height:16px;color:#f0f0f0">6</div>
<div class="t" style="left:0px;width:33px;text-align:center;top:442.96px;font-size:16px;line-height:16px;color:#f0f0f0">7</div>
<div class="t" style="left:0px;width:33px;text-align:center;top:466.96px;font-size:16px;line-height:16px;color:#f0f0f0">8</div>
<div class="t" style="left:0px;width:33px;text-align:center;top:490.96px;font-size:16px;line-height:16px;color:#f0f0f0">9</div>
<div class="t" style="left:0px;width:33px;text-align:center;top:514.96px;font-size:16px;line-height:16px;color:#f0f0f0">10</div>
<div class="t" style="left:0px;width:33px;text-align:center;top:538.96px;font-size:16px;line-height:16px;color:#f0f0f0">11</div>
<div class="t" style="left:0px;width:33px;text-align:center;top:562.96px;font-size:16px;line-height:16px;color:#f0f0f0">12</div>
<div class="t" style="left:0px;width:33px;text-align:center;top:586.96px;font-size:16px;line-height:16px;color:#f0f0f0">13</div>
<div class="t" style="left:118.4px;top:298.66px;font-size:16px;line-height:16px;color:#000;font-weight:700;">Statut</div>
<div class="t" style="left:228.9px;top:298.66px;font-size:16px;line-height:16px;color:#000;font-weight:700;">Numéro</div>
<div class="t" style="left:339.2px;top:298.66px;font-size:16px;line-height:16px;color:#000;font-weight:700;">Saisie en cours</div>
<div class="t" style="left:467.8px;top:298.66px;font-size:16px;line-height:16px;color:#000;font-weight:700;">Bloqué par</div>
<div class="t" style="left:706.9px;top:298.66px;font-size:16px;line-height:16px;color:#000;font-weight:700;">Echéance</div>
<div class="t" style="left:786.5px;top:298.66px;font-size:16px;line-height:16px;color:#000;font-weight:700;">Date</div>
<div class="t" style="left:866.7px;top:298.66px;font-size:16px;line-height:16px;color:#000;font-weight:700;">Da</div>
<div class="t" style="left:117.0px;top:322.90px;font-size:15px;line-height:15px;color:#000;font-weight:700;transform:scaleX(0.925);transform-origin:0 0;">Saisie en cours</div>
<div class="t" style="left:338.3px;top:322.90px;font-size:15px;line-height:15px;color:#000;font-weight:700;">OUI</div>
<div class="t" style="left:707.6px;top:323.05px;font-size:14px;line-height:14px;color:#000;font-weight:700;letter-spacing:1.08px;">########</div>
<div class="t" style="left:787.5px;top:323.05px;font-size:14px;line-height:14px;color:#000;font-weight:700;letter-spacing:1.08px;">########</div>
<div class="t" style="left:117.0px;top:346.90px;font-size:15px;line-height:15px;color:#000;font-weight:700;transform:scaleX(0.925);transform-origin:0 0;">Saisie en cours</div>
<div class="t" style="left:338.3px;top:346.90px;font-size:15px;line-height:15px;color:#000;font-weight:700;">OUI</div>
<div class="t" style="left:707.6px;top:347.05px;font-size:14px;line-height:14px;color:#000;font-weight:700;letter-spacing:1.08px;">########</div>
<div class="t" style="left:787.5px;top:347.05px;font-size:14px;line-height:14px;color:#000;font-weight:700;letter-spacing:1.08px;">########</div>
<div class="t" style="left:117.0px;top:370.90px;font-size:15px;line-height:15px;color:#000;font-weight:700;transform:scaleX(0.925);transform-origin:0 0;">Saisie en cours</div>
<div class="t" style="left:338.3px;top:370.90px;font-size:15px;line-height:15px;color:#000;font-weight:700;">OUI</div>
<div class="t" style="left:707.6px;top:371.05px;font-size:14px;line-height:14px;color:#000;font-weight:700;letter-spacing:1.08px;">########</div>
<div class="t" style="left:787.5px;top:371.05px;font-size:14px;line-height:14px;color:#000;font-weight:700;letter-spacing:1.08px;">########</div>
<div class="t" style="left:117.0px;top:395.06px;font-size:16px;line-height:16px;color:#000;font-weight:400;">Validé</div>
<div class="t" style="left:338.4px;top:395.06px;font-size:16px;line-height:16px;color:#000;font-weight:400;">NON</div>
<div class="t" style="left:707.6px;top:395.05px;font-size:14px;line-height:14px;color:#000;font-weight:400;letter-spacing:1.08px;">########</div>
<div class="t" style="left:787.5px;top:395.05px;font-size:14px;line-height:14px;color:#000;font-weight:400;letter-spacing:1.08px;">########</div>
<div class="t" style="left:117.0px;top:418.90px;font-size:15px;line-height:15px;color:#000;font-weight:700;transform:scaleX(0.925);transform-origin:0 0;">Saisie en cours</div>
<div class="t" style="left:338.3px;top:418.90px;font-size:15px;line-height:15px;color:#000;font-weight:700;">OUI</div>
<div class="t" style="left:707.6px;top:419.05px;font-size:14px;line-height:14px;color:#000;font-weight:700;letter-spacing:1.08px;">########</div>
<div class="t" style="left:787.5px;top:419.05px;font-size:14px;line-height:14px;color:#000;font-weight:700;letter-spacing:1.08px;">########</div>
<div class="t" style="left:117.0px;top:442.90px;font-size:15px;line-height:15px;color:#000;font-weight:700;transform:scaleX(0.925);transform-origin:0 0;">Saisie en cours</div>
<div class="t" style="left:338.3px;top:442.90px;font-size:15px;line-height:15px;color:#000;font-weight:700;">OUI</div>
<div class="t" style="left:707.6px;top:443.05px;font-size:14px;line-height:14px;color:#000;font-weight:700;letter-spacing:1.08px;">########</div>
<div class="t" style="left:787.5px;top:443.05px;font-size:14px;line-height:14px;color:#000;font-weight:700;letter-spacing:1.08px;">########</div>
<div class="t" style="left:117.0px;top:467.06px;font-size:16px;line-height:16px;color:#000;font-weight:400;">Validé</div>
<div class="t" style="left:338.4px;top:467.06px;font-size:16px;line-height:16px;color:#000;font-weight:400;">NON</div>
<div class="t" style="left:707.6px;top:467.05px;font-size:14px;line-height:14px;color:#000;font-weight:400;letter-spacing:1.08px;">########</div>
<div class="t" style="left:787.5px;top:467.05px;font-size:14px;line-height:14px;color:#000;font-weight:400;letter-spacing:1.08px;">########</div>
<div class="t" style="left:117.0px;top:491.06px;font-size:16px;line-height:16px;color:#000;font-weight:400;">Validé</div>
<div class="t" style="left:338.4px;top:491.06px;font-size:16px;line-height:16px;color:#000;font-weight:400;">NON</div>
<div class="t" style="left:707.6px;top:491.05px;font-size:14px;line-height:14px;color:#000;font-weight:400;letter-spacing:1.08px;">########</div>
<div class="t" style="left:787.5px;top:491.05px;font-size:14px;line-height:14px;color:#000;font-weight:400;letter-spacing:1.08px;">########</div>
<div class="t" style="left:117.0px;top:515.06px;font-size:16px;line-height:16px;color:#000;font-weight:400;">Validé</div>
<div class="t" style="left:338.4px;top:515.06px;font-size:16px;line-height:16px;color:#000;font-weight:400;">NON</div>
<div class="t" style="left:707.6px;top:515.05px;font-size:14px;line-height:14px;color:#000;font-weight:400;letter-spacing:1.08px;">########</div>
<div class="t" style="left:787.5px;top:515.05px;font-size:14px;line-height:14px;color:#000;font-weight:400;letter-spacing:1.08px;">########</div>
<div class="t" style="left:117.0px;top:539.06px;font-size:16px;line-height:16px;color:#000;font-weight:400;">Validé</div>
<div class="t" style="left:338.4px;top:539.06px;font-size:16px;line-height:16px;color:#000;font-weight:400;">NON</div>
<div class="t" style="left:707.6px;top:539.05px;font-size:14px;line-height:14px;color:#000;font-weight:400;letter-spacing:1.08px;">########</div>
<div class="t" style="left:787.5px;top:539.05px;font-size:14px;line-height:14px;color:#000;font-weight:400;letter-spacing:1.08px;">########</div>
<div class="t" style="left:117.0px;top:562.90px;font-size:15px;line-height:15px;color:#000;font-weight:700;transform:scaleX(0.925);transform-origin:0 0;">Saisie en cours</div>
<div class="t" style="left:338.3px;top:562.90px;font-size:15px;line-height:15px;color:#000;font-weight:700;">OUI</div>
<div class="t" style="left:707.6px;top:563.05px;font-size:14px;line-height:14px;color:#000;font-weight:700;letter-spacing:1.08px;">########</div>
<div class="t" style="left:787.5px;top:563.05px;font-size:14px;line-height:14px;color:#000;font-weight:700;letter-spacing:1.08px;">########</div>
<div class="t" style="left:117.0px;top:586.90px;font-size:15px;line-height:15px;color:#000;font-weight:700;transform:scaleX(0.925);transform-origin:0 0;">Saisie en cours</div>
<div class="t" style="left:338.3px;top:586.90px;font-size:15px;line-height:15px;color:#000;font-weight:700;">OUI</div>
<div class="t" style="left:707.6px;top:587.05px;font-size:14px;line-height:14px;color:#000;font-weight:700;letter-spacing:1.08px;">########</div>
<div class="t" style="left:787.5px;top:587.05px;font-size:14px;line-height:14px;color:#000;font-weight:700;letter-spacing:1.08px;">########</div>
<div class="r" style="left:227px;top:319px;width:101px;height:6px;background:linear-gradient(90deg,#ececec 0px 6px,#fcfcfc 6px 18px,#fcfcfc 18px 30px,#fcfcfc 30px 42px,#fcfcfc 42px 54px,#fcfcfc 54px 66px,#fcfcfc 66px 78px,#fcfcfc 78px 90px,#fcfcfc 90px 101px)"></div>
<div class="r" style="left:227px;top:337px;width:101px;height:12px;background:linear-gradient(90deg,#ececec 0px 6px,#fcfcfc 6px 18px,#fcfcfc 18px 30px,#fcfcfc 30px 42px,#fcfcfc 42px 54px,#fcfcfc 54px 66px,#fcfcfc 66px 78px,#fcfcfc 78px 90px,#fcfcfc 90px 101px)"></div>
<div class="r" style="left:227px;top:361px;width:101px;height:12px;background:linear-gradient(90deg,#ececec 0px 6px,#fcfcfc 6px 18px,#fcfcfc 18px 30px,#fcfcfc 30px 42px,#fcfcfc 42px 54px,#fcfcfc 54px 66px,#fcfcfc 66px 78px,#fcfcfc 78px 90px,#fcfcfc 90px 101px)"></div>
<div class="r" style="left:227px;top:385px;width:101px;height:12px;background:linear-gradient(90deg,#e4e2e1 0px 6px,#efefef 6px 18px,#fdfdfd 18px 30px,#f0f0f0 30px 42px,#f8f8f8 42px 54px,#f3f3f3 54px 66px,#fafaf8 66px 78px,#efefef 78px 90px,#f6f7f7 90px 101px)"></div>
<div class="r" style="left:227px;top:409px;width:101px;height:12px;background:linear-gradient(90deg,#ececec 0px 6px,#fcfcfc 6px 18px,#fcfcfc 18px 30px,#fcfcfc 30px 42px,#fcfcfc 42px 54px,#fcfcfc 54px 66px,#fcfcfc 66px 78px,#fcfcfc 78px 90px,#fcfcfc 90px 101px)"></div>
<div class="r" style="left:227px;top:433px;width:101px;height:12px;background:linear-gradient(90deg,#ececec 0px 6px,#fcfcfc 6px 18px,#fcfcfc 18px 30px,#fcfcfc 30px 42px,#fcfcfc 42px 54px,#fcfcfc 54px 66px,#fcfcfc 66px 78px,#fcfcfc 78px 90px,#fcfcfc 90px 101px)"></div>
<div class="r" style="left:227px;top:457px;width:101px;height:12px;background:linear-gradient(90deg,#e4e2e1 0px 6px,#efefef 6px 18px,#fdfdfd 18px 30px,#f0f0f0 30px 42px,#f8f8f8 42px 54px,#f5f5f5 54px 66px,#fafafa 66px 78px,#efefef 78px 90px,#eeeeee 90px 101px)"></div>
<div class="r" style="left:227px;top:481px;width:101px;height:12px;background:linear-gradient(90deg,#e9e8e7 0px 6px,#efefef 6px 18px,#fdfdfd 18px 30px,#f0f0f0 30px 42px,#f8f8f8 42px 54px,#f5f5f5 54px 66px,#fafafa 66px 78px,#f7f7f7 78px 90px,#ededed 90px 101px)"></div>
<div class="r" style="left:227px;top:505px;width:101px;height:12px;background:linear-gradient(90deg,#e8e7e6 0px 6px,#f0f0f0 6px 18px,#fdfdfd 18px 30px,#f1f1f1 30px 42px,#f8f8f8 42px 54px,#f3f3f3 54px 66px,#fafafa 66px 78px,#f5f5f5 78px 90px,#f5f5f5 90px 101px)"></div>
<div class="r" style="left:227px;top:529px;width:101px;height:12px;background:linear-gradient(90deg,#e4e2e1 0px 6px,#efefef 6px 18px,#fdfdfd 18px 30px,#f0f0f0 30px 42px,#f8f8f8 42px 54px,#f5f5f5 54px 66px,#fafafa 66px 78px,#efefef 78px 90px,#f6f7f7 90px 101px)"></div>
<div class="r" style="left:227px;top:553px;width:101px;height:12px;background:linear-gradient(90deg,#ececec 0px 6px,#fcfcfc 6px 18px,#fcfcfc 18px 30px,#fcfcfc 30px 42px,#fcfcfc 42px 54px,#fcfcfc 54px 66px,#fcfcfc 66px 78px,#fcfcfc 78px 90px,#fcfcfc 90px 101px)"></div>
<div class="r" style="left:227px;top:577px;width:101px;height:12px;background:linear-gradient(90deg,#ececec 0px 6px,#fcfcfc 6px 18px,#fcfcfc 18px 30px,#fcfcfc 30px 42px,#fcfcfc 42px 54px,#fcfcfc 54px 66px,#fcfcfc 66px 78px,#fcfcfc 78px 90px,#fcfcfc 90px 101px)"></div>
<div class="r" style="left:227px;top:601px;width:101px;height:4px;background:linear-gradient(90deg,#ececec 0px 6px,#fcfcfc 6px 18px,#fcfcfc 18px 30px,#fcfcfc 30px 42px,#fcfcfc 42px 54px,#fcfcfc 54px 66px,#fcfcfc 66px 78px,#fcfcfc 78px 90px,#fcfcfc 90px 101px)"></div>
<div class="r" style="left:227px;top:325px;width:101px;height:12px;background:linear-gradient(90deg,#858585 0px 6px,#9a9b9f 6px 18px,#bcb6b1 18px 30px,#979b9f 30px 42px,#c8bfb8 42px 54px,#a1a6ad 54px 66px,#bab5ae 66px 78px,#7d8189 78px 90px,#a8a8a8 90px 101px)"></div>
<div class="r" style="left:227px;top:349px;width:101px;height:12px;background:linear-gradient(90deg,#858585 0px 6px,#9a9b9f 6px 18px,#bcb6b1 18px 30px,#979b9f 30px 42px,#bcb7b0 42px 54px,#a2a3a8 54px 66px,#bcb7b0 66px 78px,#878b91 78px 90px,#bdbdbd 90px 101px)"></div>
<div class="r" style="left:227px;top:373px;width:101px;height:12px;background:linear-gradient(90deg,#858585 0px 6px,#9a9b9f 6px 18px,#bcb6b1 18px 30px,#979b9f 30px 42px,#c8bfb8 42px 54px,#9096a0 54px 66px,#bcb7b0 66px 78px,#a3a4a9 78px 90px,#a8a8a8 90px 101px)"></div>
<div class="r" style="left:227px;top:397px;width:101px;height:12px;background:linear-gradient(90deg,#aeaeb0 0px 6px,#cfcdcb 6px 18px,#d4d4d2 18px 30px,#b2b2b2 30px 42px,#c9c9c9 42px 54px,#adadaf 54px 66px,#e4e4e4 66px 78px,#b5b5b5 78px 90px,#b4b4b6 90px 101px)"></div>
<div class="r" style="left:227px;top:421px;width:101px;height:12px;background:linear-gradient(90deg,#858585 0px 6px,#999b9e 6px 18px,#bcb6b1 18px 30px,#979b9f 30px 42px,#c8bfb8 42px 54px,#9096a0 54px 66px,#bcb7b0 66px 78px,#7d8189 78px 90px,#c3c3c3 90px 101px)"></div>
<div class="r" style="left:227px;top:445px;width:101px;height:12px;background:linear-gradient(90deg,#858585 0px 6px,#999b9e 6px 18px,#bcb6b1 18px 30px,#979b9f 30px 42px,#c8bfb8 42px 54px,#9096a0 54px 66px,#bcb7b0 66px 78px,#9096a0 78px 90px,#bdbdbd 90px 101px)"></div>
<div class="r" style="left:227px;top:469px;width:101px;height:12px;background:linear-gradient(90deg,#aeaeb0 0px 6px,#cfcdcb 6px 18px,#d4d4d2 18px 30px,#b4b4b4 30px 42px,#dcdcde 42px 54px,#aaa9ac 54px 66px,#dad9d7 66px 78px,#b8b7b9 78px 90px,#bfbfc1 90px 101px)"></div>
<div class="r" style="left:227px;top:493px;width:101px;height:12px;background:linear-gradient(90deg,#adacaf 0px 6px,#cfcdcb 6px 18px,#d3d3d1 18px 30px,#b2b2b2 30px 42px,#c8c8c8 42px 54px,#adadaf 54px 66px,#dcdcda 66px 78px,#bab6b1 78px 90px,#c2c8cf 90px 101px)"></div>
<div class="r" style="left:227px;top:517px;width:101px;height:12px;background:linear-gradient(90deg,#aeaeb0 0px 6px,#d0cfcd 6px 18px,#d4d4d2 18px 30px,#b2b2b2 30px 42px,#dddddf 42px 54px,#aeaeb0 54px 66px,#c3c3c3 66px 78px,#b0b0b2 78px 90px,#c0bfbd 90px 101px)"></div>
<div class="r" style="left:227px;top:541px;width:101px;height:12px;background:linear-gradient(90deg,#aeaeb0 0px 6px,#cfcdcb 6px 18px,#d4d4d2 18px 30px,#b2b2b2 30px 42px,#c9c9c9 42px 54px,#adadaf 54px 66px,#e4e4e4 66px 78px,#b5b5b5 78px 90px,#b4b4b6 90px 101px)"></div>
<div class="r" style="left:227px;top:565px;width:101px;height:12px;background:linear-gradient(90deg,#858585 0px 6px,#999b9e 6px 18px,#bcb6b1 18px 30px,#979b9f 30px 42px,#c8bfb8 42px 54px,#9096a0 54px 66px,#bcb7b0 66px 78px,#878b91 78px 90px,#a8a8a8 90px 101px)"></div>
<div class="r" style="left:227px;top:589px;width:101px;height:12px;background:linear-gradient(90deg,#858585 0px 6px,#999b9e 6px 18px,#bcb6b1 18px 30px,#979b9f 30px 42px,#c8bfb8 42px 54px,#9096a0 54px 66px,#bcb7b0 66px 78px,#878b91 78px 90px,#999999 90px 101px)"></div>
<div class="r" style="left:464px;top:319px;width:226px;height:6px;background:#fcfcfc;"></div>
<div class="r" style="left:464px;top:337px;width:226px;height:12px;background:#fcfcfc;"></div>
<div class="r" style="left:464px;top:361px;width:226px;height:12px;background:#fcfcfc;"></div>
<div class="r" style="left:464px;top:385px;width:226px;height:12px;background:#fcfcfc;"></div>
<div class="r" style="left:464px;top:409px;width:226px;height:12px;background:#fcfcfc;"></div>
<div class="r" style="left:464px;top:433px;width:226px;height:12px;background:#fcfcfc;"></div>
<div class="r" style="left:464px;top:457px;width:226px;height:12px;background:#fcfcfc;"></div>
<div class="r" style="left:464px;top:481px;width:226px;height:12px;background:#fcfcfc;"></div>
<div class="r" style="left:464px;top:505px;width:226px;height:12px;background:#fcfcfc;"></div>
<div class="r" style="left:464px;top:529px;width:226px;height:12px;background:#fcfcfc;"></div>
<div class="r" style="left:464px;top:553px;width:226px;height:12px;background:#fcfcfc;"></div>
<div class="r" style="left:464px;top:577px;width:226px;height:12px;background:#fcfcfc;"></div>
<div class="r" style="left:464px;top:601px;width:226px;height:4px;background:#fcfcfc;"></div>
<div class="r" style="left:464px;top:325px;width:42px;height:12px;background:linear-gradient(90deg,#cbbfb6 0px 6px,#999a99 6px 18px,#7f7f7f 18px 30px,#929899 30px 42px)"></div>
<div class="r" style="left:506px;top:325px;width:184px;height:12px;background:#fefefe;"></div>
<div class="r" style="left:464px;top:349px;width:42px;height:12px;background:linear-gradient(90deg,#cbbfb6 0px 6px,#999a99 6px 18px,#7f7f7f 18px 30px,#929899 30px 42px)"></div>
<div class="r" style="left:506px;top:349px;width:184px;height:12px;background:#fefefe;"></div>
<div class="r" style="left:464px;top:373px;width:226px;height:12px;background:linear-gradient(90deg,#d8cfc8 0px 6px,#919699 6px 18px,#8c8480 18px 30px,#909598 30px 42px,#958e8b 42px 54px,#9b9b99 54px 66px,#b4b3b8 66px 78px,#9b9a98 78px 90px,#7f797c 90px 102px,#8f8f8f 102px 114px,#a6a7a9 114px 126px,#8b8b8b 126px 138px,#9a9a98 138px 150px,#8f8d8e 150px 162px,#9b9b9f 162px 174px,#8c8c8a 174px 186px,#a9aaac 186px 198px,#adacaa 198px 210px,#a2a2a2 210px 222px,#8c90a0 222px 226px)"></div>
<div class="r" style="left:464px;top:397px;width:226px;height:12px;background:#fefefe;"></div>
<div class="r" style="left:464px;top:421px;width:42px;height:12px;background:linear-gradient(90deg,#cbbfb6 0px 6px,#999a99 6px 18px,#7f7f7f 18px 30px,#929899 30px 42px)"></div>
<div class="r" style="left:506px;top:421px;width:184px;height:12px;background:#fefefe;"></div>
<div class="r" style="left:464px;top:445px;width:42px;height:12px;background:linear-gradient(90deg,#cbbfb6 0px 6px,#999a99 6px 18px,#7f7f7f 18px 30px,#929899 30px 42px)"></div>
<div class="r" style="left:506px;top:445px;width:184px;height:12px;background:#fefefe;"></div>
<div class="r" style="left:464px;top:469px;width:226px;height:12px;background:#fefefe;"></div>
<div class="r" style="left:464px;top:493px;width:226px;height:12px;background:#fefefe;"></div>
<div class="r" style="left:464px;top:517px;width:226px;height:12px;background:#fefefe;"></div>
<div class="r" style="left:464px;top:541px;width:226px;height:12px;background:#fefefe;"></div>
<div class="r" style="left:464px;top:565px;width:42px;height:12px;background:linear-gradient(90deg,#cbbfb6 0px 6px,#999a99 6px 18px,#7f7f7f 18px 30px,#929899 30px 42px)"></div>
<div class="r" style="left:506px;top:565px;width:184px;height:12px;background:#fefefe;"></div>
<div class="r" style="left:464px;top:589px;width:42px;height:12px;background:linear-gradient(90deg,#cbbfb6 0px 6px,#999a99 6px 18px,#7f7f7f 18px 30px,#929899 30px 42px)"></div>
<div class="r" style="left:506px;top:589px;width:184px;height:12px;background:#fefefe;"></div>
<div class="r" style="left:328px;top:468px;width:1px;height:2px;background:#3a8ee8;"></div>
<div class="r" style="left:328px;top:492px;width:1px;height:2px;background:#3a8ee8;"></div>
<div class="r" style="left:328px;top:523px;width:1px;height:3px;background:#5aa8f0;"></div>
<div class="r" style="left:690px;top:370px;width:8px;height:18px;overflow:hidden"><div class="t" style="left:-3px;top:1.75px;font-size:14px;line-height:14px;font-weight:700;color:#000">n</div></div>
<div class="r" style="left:116px;top:291px;width:107px;height:311px;box-shadow:inset 2px 2px 3px rgba(0,0,0,0.28)"></div>
<div class="r" style="left:114px;top:289px;width:111px;height:315px;box-shadow:1px 1px 3px rgba(0,0,0,0.35)"></div>
<svg class="r" style="left:110px;top:285px;" width="120" height="325" viewBox="0 0 120 325"><rect x="4.95" y="4.95" width="109" height="312.8" fill="none" stroke="#fa0000" stroke-width="2.3"/></svg>
</body></html>
